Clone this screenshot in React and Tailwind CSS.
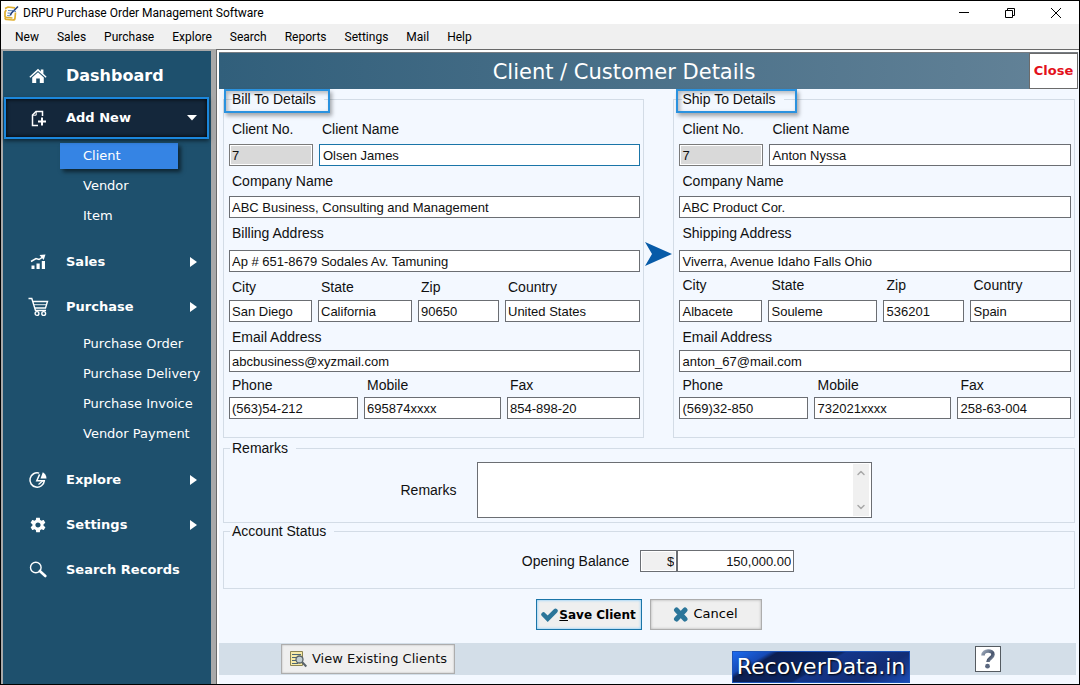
import { useState } from 'react';
import { ChevronDown, ChevronUp } from 'lucide-react';
import { IoMdSettings } from 'react-icons/io';

const menuItems = ['New', 'Sales', 'Purchase', 'Explore', 'Search', 'Reports', 'Settings', 'Mail', 'Help'];

const billFields = [
  {
    gap: 'gap-[5px]',
    fields: [
      { name: 'no', label: 'Client No.', value: '7', width: 'w-[84px]', readOnly: true },
      { name: 'name', label: 'Client Name', value: 'Olsen James', width: 'flex-1', active: true },
    ],
  },
  { gap: 'mt-[5px] gap-[5px]', fields: [{ name: 'company', label: 'Company Name', value: 'ABC Business, Consulting and Management', width: 'flex-1' }] },
  { gap: 'mt-[5px] gap-[7px]', fields: [{ name: 'address', label: 'Billing Address', value: 'Ap # 651-8679 Sodales Av. Tamuning', width: 'flex-1' }] },
  {
    gap: 'mt-[5px] gap-[3px]',
    fields: [
      { name: 'city', label: 'City', value: 'San Diego', width: 'w-[83px]' },
      { name: 'state', label: 'State', value: 'California', width: 'w-[94px]' },
      { name: 'zip', label: 'Zip', value: '90650', width: 'w-[81px]' },
      { name: 'country', label: 'Country', value: 'United States', width: 'flex-1' },
    ],
  },
  { gap: 'mt-[5px] gap-[3px]', fields: [{ name: 'email', label: 'Email Address', value: 'abcbusiness@xyzmail.com', width: 'flex-1' }] },
  {
    gap: 'mt-[3px] gap-[2px]',
    fields: [
      { name: 'phone', label: 'Phone', value: '(563)54-212', width: 'w-[129px]' },
      { name: 'mobile', label: 'Mobile', value: '695874xxxx', width: 'w-[137px]' },
      { name: 'fax', label: 'Fax', value: '854-898-20', width: 'flex-1' },
    ],
  },
];

const shipFields = [
  {
    gap: 'gap-[5px]',
    fields: [
      { name: 'no', label: 'Client No.', value: '7', width: 'w-[84px]', readOnly: true },
      { name: 'name', label: 'Client Name', value: 'Anton Nyssa', width: 'flex-1' },
    ],
  },
  { gap: 'mt-[5px] gap-[5px]', fields: [{ name: 'company', label: 'Company Name', value: 'ABC Product Cor.', width: 'flex-1' }] },
  { gap: 'mt-[5px] gap-[7px]', fields: [{ name: 'address', label: 'Shipping Address', value: 'Viverra, Avenue Idaho Falls Ohio', width: 'flex-1' }] },
  {
    gap: 'mt-[3px] gap-[5px]',
    fields: [
      { name: 'city', label: 'City', value: 'Albacete', width: 'w-[83px]' },
      { name: 'state', label: 'State', value: 'Souleme', width: 'w-[109px]' },
      { name: 'zip', label: 'Zip', value: '536201', width: 'w-[81px]' },
      { name: 'country', label: 'Country', value: 'Spain', width: 'flex-1' },
    ],
  },
  { gap: 'mt-[5px] gap-[3px]', fields: [{ name: 'email', label: 'Email Address', value: 'anton_67@mail.com', width: 'flex-1' }] },
  {
    gap: 'mt-[3px] gap-[2px]',
    fields: [
      { name: 'phone', label: 'Phone', value: '(569)32-850', width: 'w-[129px]' },
      { name: 'mobile', label: 'Mobile', value: '732021xxxx', width: 'w-[137px]' },
      { name: 'fax', label: 'Fax', value: '258-63-004', width: 'flex-1' },
    ],
  },
];

function AppIcon() {
  return (
    <svg width="16" height="16" viewBox="0 0 16 16" fill="none" aria-hidden="true">
      <path d="M2 3.500L5 2l7 .8M3.200 5L2 7v5M12.500 7.500l-.5 5.500c0 1.500-1 2-2 2L3.500 14.500c-1.800 0-1.800-2.500 0-2.200l6 .7" stroke="#e0b030" strokeWidth="1.700" />
      <path d="M5 5.500l5 .3M4.500 8l3 .2M4.200 10.500l3 .3" stroke="#5e86b6" />
      <path d="M15 1.500L8.500 8l-1.200 2.300" stroke="#24407c" strokeWidth="1.600" />
      <path d="M9.500 5.500L13 6.500" stroke="#4b76b8" />
    </svg>
  );
}

function HomeIcon() {
  return (
    <svg width="18" height="16" viewBox="0 0 18 16" fill="#fff" aria-hidden="true">
      <path d="M9 .8L11.800 3.400V1.600h2.600v4.200l3.200 3-.9 1L9 2.900 1.300 9.800l-.9-1z" />
      <path d="M9 4.300l5.800 5.100V15h-4v-4.500H7.200V15h-4V9.400z" />
    </svg>
  );
}

function AddIcon() {
  return (
    <svg width="16" height="17" viewBox="0 0 16 17" fill="none" stroke="#fff" aria-hidden="true">
      <path d="M11.500 6V1.500H5L1.500 5v10.500H7" strokeWidth="1.500" />
      <path d="M5.200 1.500v3.700H1.500" />
      <path d="M11 7.500v8M7 11.500h8" strokeWidth="2" />
    </svg>
  );
}

function SalesIcon() {
  return (
    <svg width="17" height="16" viewBox="0 0 17 16" fill="#fff" aria-hidden="true">
      <path d="M1.500 11.500h3V15h-3zM6.500 9.500h3.200V15H6.500zM11.800 7H15v8h-3.200z" />
      <path d="M1 7.500L6 4.500l3 1L13 2.800" fill="none" stroke="#fff" strokeWidth="1.500" />
      <path d="M9.500 1L15.500.5l-1.800 5.400z" />
    </svg>
  );
}

function CartIcon() {
  return (
    <svg width="21" height="20" viewBox="0 0 21 20" fill="none" stroke="#fff" strokeWidth="1.400" aria-hidden="true">
      <path d="M.5 1.500h3.300L7.500 13.500h10.500M5 4.500h14.500L17.500 11H7" />
      <path d="M6 7.700h12.300" strokeWidth=".9" />
      <circle cx="9" cy="16.500" r="1.900" />
      <circle cx="15.700" cy="16.500" r="1.900" />
    </svg>
  );
}

function PieIcon() {
  return (
    <svg width="20" height="18" viewBox="0 0 20 18" fill="none" stroke="#fff" aria-hidden="true">
      <path d="M11.200 2.100A7.200 7.200 0 1 0 16.300 9.800H8.800L11.600 3.400" strokeWidth="1.500" />
      <path d="M14.800 9.800L10.500 13.500" strokeWidth="1.200" />
      <path d="M14.800 1.200c2 1 3.600 3 3.700 6.300h-6z" fill="#fff" stroke="none" />
    </svg>
  );
}

function SearchIcon() {
  return (
    <svg width="18" height="17" viewBox="0 0 18 17" fill="none" stroke="#fff" aria-hidden="true">
      <circle cx="6.800" cy="6.500" r="5.300" strokeWidth="1.400" />
      <path d="M10.800 10l5.500 5" strokeWidth="2.600" strokeLinecap="round" />
    </svg>
  );
}

function NavItem({ icon, label, arrow, open, large }) {
  return (
    <button
      type="button"
      className={
        open
          ? 'relative z-10 mr-0.5 ml-px flex h-[42px] items-center border-2 border-[#1b87dc] bg-[#14273b] text-left text-[13px] font-bold shadow-[0_2px_4px_#0008,inset_0_0_4px_#000]'
          : `flex w-full items-center text-left font-bold ${large ? 'h-[43px] text-base' : 'h-[45px] text-[13px]'}`
      }
    >
      <span className={`flex w-9 shrink-0 justify-center ${open ? 'ml-[15px]' : 'ml-[17px]'}`}>{icon}</span>
      <span className={`flex-1 whitespace-nowrap ${open ? 'pl-[9px]' : 'pl-[10px]'}`}>{label}</span>
      {arrow && !open && (
        <svg className="mr-[14px]" width="7" height="12" viewBox="0 0 7 12" fill="#fff" aria-hidden="true">
          <path d="M0 1l7 5-7 5z" />
        </svg>
      )}
      {open && (
        <svg className="mr-[9px]" width="12" height="6" viewBox="0 0 12 6" fill="#fff" aria-hidden="true">
          <path d="M1 0h10L6 5.500z" />
        </svg>
      )}
    </button>
  );
}

function SubItem({ label, selected }) {
  return (
    <li className="flex h-[30px] items-center">
      {selected ? (
        <a href="#" className="ml-[57px] flex h-[26px] w-[118px] items-center bg-[#3584e4] pl-[23px] shadow-[3px_3px_4px_#0008]">
          {label}
        </a>
      ) : (
        <a href="#" className="ml-20 whitespace-nowrap">{label}</a>
      )}
    </li>
  );
}

function Sidebar() {
  return (
    <nav className="mt-0.5 w-[208px] shrink-0 bg-[#1e506d] pt-[3px] font-['Verdana','DejaVu_Sans',sans-serif] text-[13px] text-white">
      <NavItem icon={<HomeIcon />} label="Dashboard" large />
      <div className="flex flex-col">
        <NavItem icon={<AddIcon />} label="Add New" arrow open />
      </div>
      <ul className="pt-0.5 pb-2">
        <SubItem label="Client" selected />
        <SubItem label="Vendor" />
        <SubItem label="Item" />
      </ul>
      <NavItem icon={<SalesIcon />} label="Sales" arrow />
      <NavItem icon={<CartIcon />} label="Purchase" arrow />
      <ul className="pb-2">
        <SubItem label="Purchase Order" />
        <SubItem label="Purchase Delivery" />
        <SubItem label="Purchase Invoice" />
        <SubItem label="Vendor Payment" />
      </ul>
      <NavItem icon={<PieIcon />} label="Explore" arrow />
      <NavItem icon={<IoMdSettings size={18} />} label="Settings" arrow />
      <NavItem icon={<SearchIcon />} label="Search Records" />
    </nav>
  );
}

function Field({ id, label, value, width, gap, readOnly, active }) {
  const [text, setText] = useState(value);
  return (
    <div className={`flex min-w-0 flex-col ${width} ${gap}`}>
      <label htmlFor={id} className="pl-[3px] leading-5 whitespace-nowrap">{label}</label>
      <input
        id={id}
        type="text"
        value={text}
        readOnly={readOnly}
        onChange={(e) => setText(e.target.value)}
        className={`h-[22px] w-full border text-[13px] outline-none ${
          readOnly
            ? 'border-[#7a7a7a] bg-[#d9d9d9] px-0.5 shadow-[inset_0_0_0_1px_#fff]'
            : active
              ? 'border-[#1a75a8] bg-white px-[3px]'
              : 'border-[#6b6e73] bg-white px-0.5'
        }`}
      />
    </div>
  );
}

function AddressGroup({ prefix, title, rows, mark }) {
  return (
    <fieldset className="min-w-0 border border-[#d3dce6] pr-[3px] pb-[18px] pl-[5px]">
      <legend className="relative ml-[3px] pr-2 leading-5 whitespace-nowrap">
        <span className="relative z-10">{title}</span>
        <span className={`absolute top-0 h-6 border-2 border-[#2a92df] shadow-[2px_3px_4px_#0005,inset_2px_2px_4px_#0004] ${mark}`} />
      </legend>
      <div className="pt-[10px]">
        {rows.map((row, i) => (
          <div key={i} className="flex gap-1.5">
            {row.fields.map((f) => (
              <Field key={f.name} id={`${prefix}-${f.name}`} gap={row.gap} {...f} />
            ))}
          </div>
        ))}
      </div>
    </fieldset>
  );
}

function TitleBar() {
  return (
    <header className="flex h-[23px] items-center bg-white pl-[2px]">
      <AppIcon />
      <h1 className="flex-1 pl-1">DRPU Purchase Order Management Software</h1>
      <div className="flex items-center gap-[34px] pr-[17px]">
        <button type="button" aria-label="Minimize">
          <svg width="12" height="12" viewBox="0 0 12 12" stroke="#000"><path d="M1 5.500h10" /></svg>
        </button>
        <button type="button" aria-label="Restore">
          <svg width="12" height="12" viewBox="0 0 12 12" fill="none" stroke="#000"><path d="M1.500 3.500h7v7h-7zM3.500 3V1.500h7v7H9" /></svg>
        </button>
        <button type="button" aria-label="Close window">
          <svg width="12" height="12" viewBox="0 0 12 12" stroke="#000"><path d="M1 1l10 10M11 1L1 11" /></svg>
        </button>
      </div>
    </header>
  );
}

function FormFooter() {
  return (
    <div className="mt-[13px] mr-0.5 flex h-8 items-center bg-[#d3dee8] pl-[62px] font-['Verdana','DejaVu_Sans',sans-serif]">
      <button type="button" className="flex h-[30px] w-[174px] shrink-0 items-center justify-center gap-1 border border-[#adadad] bg-[#efefef] text-[13px] whitespace-nowrap shadow-[inset_0_0_2px_#0004]">
        <svg width="19" height="18" viewBox="0 0 19 18" fill="none" aria-hidden="true">
          <path d="M1.500 1.500h12v14h-12z" fill="#f7eaa6" stroke="#8d8552" />
          <path d="M3 4.500h9M3 7.500h5M3 10.500h4M3 13.500h6" stroke="#4d6775" />
          <circle cx="10.500" cy="9.500" r="3.500" fill="#c2ced1" stroke="#596268" strokeWidth="1.300" />
          <path d="M13.300 12.300l4 4.200" stroke="#59636b" strokeWidth="2" />
        </svg>
        View Existing Clients
      </button>
      <a
        href="#"
        className="mt-4 mr-[65px] ml-auto flex h-8 w-[178px] shrink-0 items-center justify-center border border-[#1c54b8] bg-[linear-gradient(150deg,#1d6cf0_0%,#164ab5_16%,#0c1f52_20%,#0c2663_48%,#14368a_50%,#122d75_78%,#1c4db8_100%)] text-[22px] whitespace-nowrap text-white [text-shadow:1px_1px_2px_#000]"
      >
        RecoverData.in
      </a>
      <button type="button" aria-label="Help" className="mr-[75px] flex size-[26px] shrink-0 items-center justify-center border border-[#555b61] bg-white">
        <svg width="16" height="20" viewBox="0 0 16 20" aria-hidden="true">
          <defs>
            <linearGradient id="helpShade" x1="0" y1="0" x2="1" y2="1">
              <stop offset="0" stopColor="#9aa6b8" />
              <stop offset=".6" stopColor="#46536b" />
              <stop offset="1" stopColor="#8d99ab" />
            </linearGradient>
          </defs>
          <path d="M3 6.500C3 .5 13 .8 13 5.500c0 3.500-5 3.500-5 7.500" fill="none" stroke="url(#helpShade)" strokeWidth="3.600" />
          <circle cx="7.500" cy="17.200" r="2.400" fill="#5b6880" />
        </svg>
      </button>
    </div>
  );
}

function ClientForm() {
  const [remarks, setRemarks] = useState('');
  const [balance, setBalance] = useState('150,000.00');

  return (
    <main className="min-w-0 flex-1 border-t border-l border-[#696969] bg-[#f3f8ff] shadow-[inset_2px_2px_0_#fff]">
      <div className="mt-0.5 mr-px ml-0.5 flex h-[37px] items-stretch border-t border-[#767c82] bg-linear-to-r from-[#315f7b] to-[#648398] font-['Verdana','DejaVu_Sans',sans-serif]">
        <h2 className="flex flex-1 items-center justify-center pt-0.5 text-[21px] text-white">Client / Customer Details</h2>
        <button type="button" className="w-[49px] border border-[#6b6b6b] bg-white text-[13px] font-bold text-[#e3111b]">
          Close
        </button>
      </div>
      <form
        className="mr-px ml-0.5 bg-[#f3f8ff] pb-[9px] font-['Liberation_Sans',Arial,sans-serif] text-sm text-[#101010]"
        onSubmit={(e) => e.preventDefault()}
      >
        <div className="pr-[3px] pl-1">
          <div className="grid grid-cols-[422fr_29px_402fr]">
            <AddressGroup prefix="bill" title="Bill To Details" rows={billFields} mark="-left-2 w-[106px]" />
            <div className="flex items-center pb-5 pl-px">
              <svg width="27" height="24" viewBox="0 0 27 24" aria-hidden="true">
                <path d="M0 0l27 12L0 24l7-12z" fill="#075ba8" />
              </svg>
            </div>
            <AddressGroup prefix="ship" title="Ship To Details" rows={shipFields} mark="-left-1.5 w-[121px]" />
          </div>

          <fieldset className="border border-[#d3dce6] pb-1 pl-[5px]">
            <legend className="ml-px px-0.5 pr-2 leading-5">Remarks</legend>
            <div className="flex items-center justify-center gap-5 pt-[4px] pr-[31px]">
              <label htmlFor="remarks">Remarks</label>
              <div className="flex h-14 w-[395px] border border-[#6b6e73] bg-white p-px">
                <textarea
                  id="remarks"
                  value={remarks}
                  onChange={(e) => setRemarks(e.target.value)}
                  className="min-w-0 flex-1 resize-none px-0.5 outline-none"
                />
                <div className="mr-px flex w-4 flex-col items-center justify-between bg-[#f0f0f0] py-[3px] text-[#a9a9a9]">
                  <ChevronUp size={12} strokeWidth={3} />
                  <ChevronDown size={12} strokeWidth={3} />
                </div>
              </div>
            </div>
          </fieldset>

          <fieldset className="-mt-0.5 border border-[#d3dce6] pb-4 pl-[5px]">
            <legend className="ml-px px-0.5 pr-2 leading-5">Account Status</legend>
            <div className="flex items-center justify-center pt-[9px] pl-[13px]">
              <label htmlFor="balance" className="pr-[11px]">Opening Balance</label>
              <input
                type="text"
                aria-label="Currency"
                value="$"
                readOnly
                className="h-[22px] w-[37px] border border-[#6b6e73] bg-[#f0f0f0] px-0.5 text-right text-[13px] shadow-[inset_0_0_0_1px_#fff] outline-none"
              />
              <input
                id="balance"
                type="text"
                value={balance}
                onChange={(e) => setBalance(e.target.value)}
                className="h-[22px] w-[117px] border border-[#6b6e73] bg-white px-0.5 text-right text-[13px] outline-none"
              />
            </div>
          </fieldset>

          <div className="mt-[10px] flex justify-center gap-2 pr-px font-['Verdana','DejaVu_Sans',sans-serif] text-[13px] text-black">
            <button type="submit" className="flex h-[31px] w-[106px] items-center justify-center gap-px border border-[#1a75a8] bg-[#efefef] text-xs font-bold whitespace-nowrap shadow-[inset_0_0_3px_#6cc4ff]">
              <svg width="17" height="14" viewBox="0 0 17 14" aria-hidden="true">
                <path d="M2.500 6.500l4.200 4.200L14.500 2.800" fill="none" stroke="#2b7599" strokeWidth="4.500" strokeLinecap="round" />
              </svg>
              <span><u>S</u>ave Client</span>
            </button>
            <button type="button" className="flex h-[31px] w-[112px] items-center justify-center gap-1 border border-[#adadad] bg-[#efefef] shadow-[inset_0_0_3px_#0004]">
              <svg width="16" height="15" viewBox="0 0 16 15" aria-hidden="true">
                <path d="M3.500 3l8.500 9M12 3l-8.500 9" fill="none" stroke="#2b7599" strokeWidth="5" strokeLinecap="round" />
              </svg>
              Cancel
            </button>
          </div>
        </div>
        <FormFooter />
      </form>
    </main>
  );
}

export default function App() {
  return (
    <div className="flex min-h-screen flex-col border border-black bg-[#f0f0f0] font-['Segoe_UI',Roboto,sans-serif] text-xs text-black">
      <TitleBar />
      <nav className="flex h-[25px] items-center gap-[18px] pl-[14px]">
        {menuItems.map((item) => (
          <button key={item} type="button">{item}</button>
        ))}
      </nav>
      <div className="flex flex-1 bg-[#a9a9a9] pl-0.5">
        <Sidebar />
        <div className="w-[5px] shrink-0" />
        <ClientForm />
      </div>
    </div>
  );
}
